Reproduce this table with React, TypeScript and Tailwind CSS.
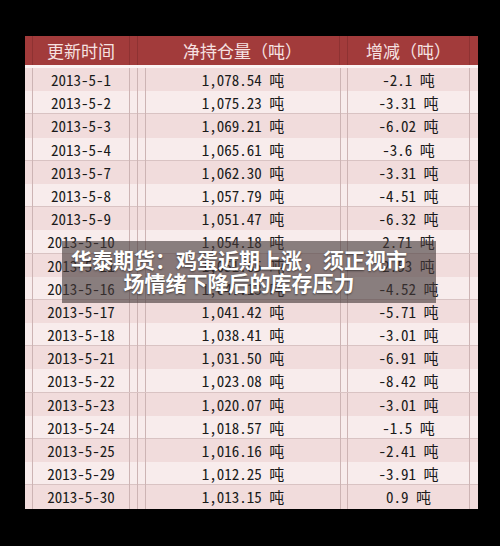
import React from 'react';

const rows: [string, string, string][] = [
  ['2013-5-1', '1,078.54', '-2.1'],
  ['2013-5-2', '1,075.23', '-3.31'],
  ['2013-5-3', '1,069.21', '-6.02'],
  ['2013-5-4', '1,065.61', '-3.6'],
  ['2013-5-7', '1,062.30', '-3.31'],
  ['2013-5-8', '1,057.79', '-4.51'],
  ['2013-5-9', '1,051.47', '-6.32'],
  ['2013-5-10', '1,054.18', '2.71'],
  ['2013-5-11', '1,051.65', '2.53'],
  ['2013-5-16', '1,047.13', '-4.52'],
  ['2013-5-17', '1,041.42', '-5.71'],
  ['2013-5-18', '1,038.41', '-3.01'],
  ['2013-5-21', '1,031.50', '-6.91'],
  ['2013-5-22', '1,023.08', '-8.42'],
  ['2013-5-23', '1,020.07', '-3.01'],
  ['2013-5-24', '1,018.57', '-1.5'],
  ['2013-5-25', '1,016.16', '-2.41'],
  ['2013-5-29', '1,012.25', '-3.91'],
  ['2013-5-30', '1,013.15', '0.9'],
];

const cols = 'grid grid-cols-[8px_97px_8px_8px_194px_8px_122px_8px]';

export default function App() {
  return (
    <div
      className="w-[500px] h-[546px] bg-black pt-[36px] pl-[25px] relative"
      style={{ fontFamily: '"Noto Sans CJK SC", "Noto Sans", sans-serif' }}
    >
      <div className="w-[453px]">
        {/* header */}
        <div className={`${cols} h-[29px] bg-[#a23b3b] text-[#f6e2e2] text-[17px] leading-[29px]`}>
          <div className="border-r border-[#8e3232]" />
          <div className="text-center border-r border-[#8e3232]">更新时间</div>
          <div className="border-r border-[#8e3232]" />
          <div />
          <div className="text-center border-r border-[#8e3232]">净持仓量（吨）</div>
          <div className="border-r border-[#8e3232]" />
          <div className="text-center border-r border-[#8e3232]">增减（吨）</div>
          <div />
        </div>
        <div className="h-[3px] bg-[#fbf3f3]" />
        {/* body */}
        <div className="text-[15px] text-[#1a1a1a] [font-feature-settings:'hwid']">
          {rows.map(([d, v, c], i) => (
            <div
              key={d}
              className={`${cols} h-[23.2px] leading-[23px] ${
                i % 2 === 0 ? 'bg-[#f1dcdc]' : 'bg-[#f8ecec] border-b border-[#d9c3c3]'
              }`}
            >
              <div className="border-r border-[#cdb4b4]" />
              <div className="text-center border-r border-[#cdb4b4]">{d}</div>
              <div className="border-r border-[#cdb4b4]" />
              <div className="border-r border-[#cdb4b4]" />
              <div className="text-center">{v} 吨</div>
              <div className="border-l border-r border-[#cdb4b4]" />
              <div className="text-center border-r border-[#cdb4b4]">{c} 吨</div>
              <div />
            </div>
          ))}
        </div>
      </div>

      {/* caption overlay */}
      <div className="absolute left-[62px] top-[241px] w-[374px] h-[62px] bg-[rgba(70,58,58,0.62)] pr-[20px] pt-[7px] text-center text-white font-bold text-[21px] leading-[23px] [text-shadow:0_1px_2px_rgba(0,0,0,0.5)]">
        <div>华泰期货：鸡蛋近期上涨，须正视市</div>
        <div>场情绪下降后的库存压力</div>
      </div>
    </div>
  );
}
